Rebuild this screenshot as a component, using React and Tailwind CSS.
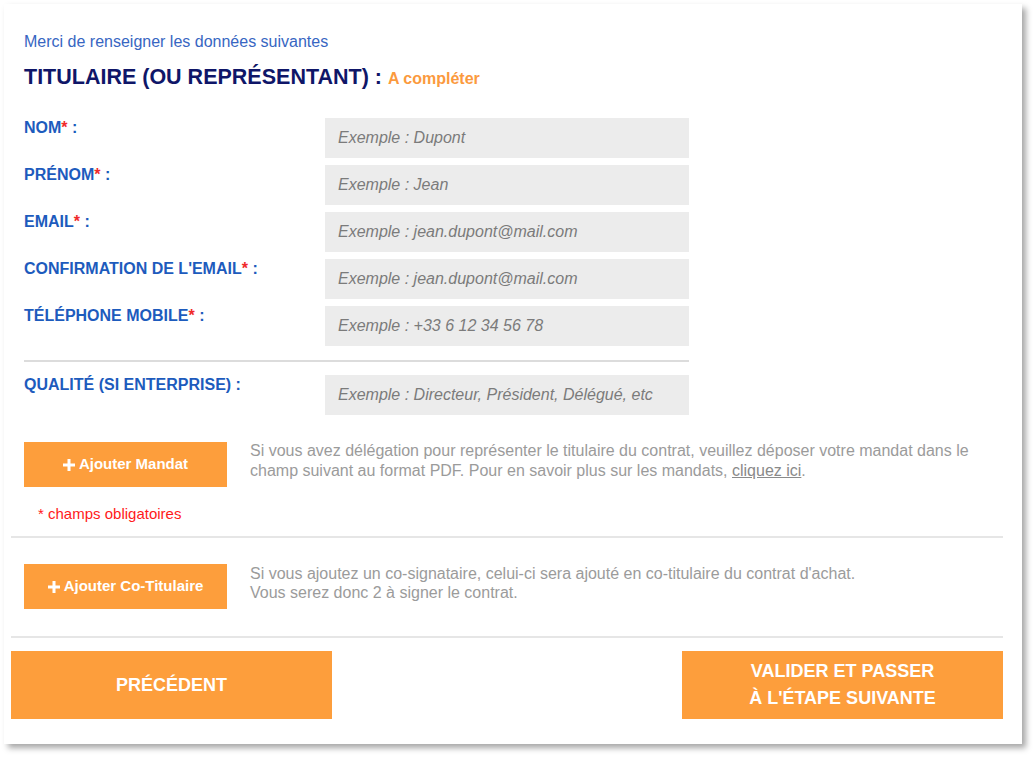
import React from 'react';

const fields = [
    { label: 'NOM', placeholder: 'Exemple : Dupont' },
    { label: 'PRÉNOM', placeholder: 'Exemple : Jean' },
    { label: 'EMAIL', placeholder: 'Exemple : jean.dupont@mail.com' },
    { label: "CONFIRMATION DE L'EMAIL", placeholder: 'Exemple : jean.dupont@mail.com' },
    { label: 'TÉLÉPHONE MOBILE', placeholder: 'Exemple : +33 6 12 34 56 78' },
];

const Plus = () => (
    <svg width="12" height="12" viewBox="0 0 12 12" className="mr-[4px] shrink-0">
        <path d="M4.5 0h3v4.5H12v3H7.5V12h-3V7.5H0v-3h4.5z" fill="white" />
    </svg>
);

const Row = ({ label, placeholder, required = true }) => (
    <div className="flex items-start">
        <div className="w-[301px] leading-5 text-[16px] font-bold text-[#1d5bbd]">
            {label}
            {required && <span className="text-[#f02a2a]">*</span>} :
        </div>
        <input
            placeholder={placeholder}
            className="w-[364px] h-10 bg-[#ececec] pl-[13px] text-[16px] italic outline-none placeholder:text-[#7b7b7b]"
        />
    </div>
);

const App = () => {
    return (
        <div className="w-[1035px] h-[757px] bg-white pt-[4px] pl-[4px]" style={{ fontFamily: '"Liberation Sans", Arial, sans-serif' }}>
            <div className="w-[1018px] h-[740px] bg-white shadow-[4px_4px_6px_rgba(0,0,0,0.35)] pl-[7px] pr-[19px]">
                <div className="pl-[13px] pt-[28px]">
                    <p className="text-[16px] leading-5 text-[#3766c2]">Merci de renseigner les données suivantes</p>
                    <h1 className="mt-[13px] flex items-baseline text-[21.5px] font-bold text-[#0f1668] leading-6">
                        TITULAIRE (OU REPRÉSENTANT) :
                        <span className="ml-[6px] text-[16px] text-[#fb9a3e]">A compléter</span>
                    </h1>
                    <div className="mt-[27px] flex flex-col gap-[7px]">
                        {fields.map((f) => (
                            <Row key={f.label} {...f} />
                        ))}
                    </div>
                    <div className="w-[665px] h-[2px] bg-[#dcdcdc] mt-[14px] mb-[13px]"></div>
                    <Row label="QUALITÉ (SI ENTERPRISE)" placeholder="Exemple : Directeur, Président, Délégué, etc" required={false} />

                    <div className="mt-[27px] flex items-start">
                        <button className="w-[203px] shrink-0 h-[45px] bg-[#fd9e3c] text-white font-bold text-[15px] flex items-center justify-center">
                            <Plus />Ajouter Mandat
                        </button>
                        <p className="ml-[23px] w-[735px] text-[16px] leading-5 text-[#9b9b9b] -mt-[1px]">
                            Si vous avez délégation pour représenter le titulaire du contrat, veuillez déposer votre mandat dans le champ suivant au format PDF. Pour en savoir plus sur les mandats, <a className="underline text-[#8a8a8a]">cliquez ici</a>.
                        </p>
                    </div>
                    <p className="mt-[17px] ml-[14px] text-[15px] leading-5 text-[#ff1a1a]">* champs obligatoires</p>
                </div>

                <div className="mt-[12px] h-[2px] bg-[#e6e6e6]"></div>

                <div className="pl-[13px] mt-[26px] flex items-start">
                    <button className="w-[203px] shrink-0 h-[45px] bg-[#fd9e3c] text-white font-bold text-[15px] flex items-center justify-center">
                        <Plus />Ajouter Co-Titulaire
                    </button>
                    <p className="ml-[23px] text-[16px] leading-[19px] text-[#9b9b9b]">
                        Si vous ajoutez un co-signataire, celui-ci sera ajouté en co-titulaire du contrat d'achat.<br />
                        Vous serez donc 2 à signer le contrat.
                    </p>
                </div>

                <div className="mt-[27px] h-[2px] bg-[#e6e6e6]"></div>

                <div className="mt-[13px] flex justify-between">
                    <button className="w-[321px] h-[68px] bg-[#fd9e3c] text-white font-bold text-[18px]">
                        PRÉCÉDENT
                    </button>
                    <button className="w-[321px] h-[68px] bg-[#fd9e3c] text-white font-bold text-[18px] leading-[27px]">
                        VALIDER ET PASSER<br />À L'ÉTAPE SUIVANTE
                    </button>
                </div>
            </div>
        </div>
    );
};

export default App;
